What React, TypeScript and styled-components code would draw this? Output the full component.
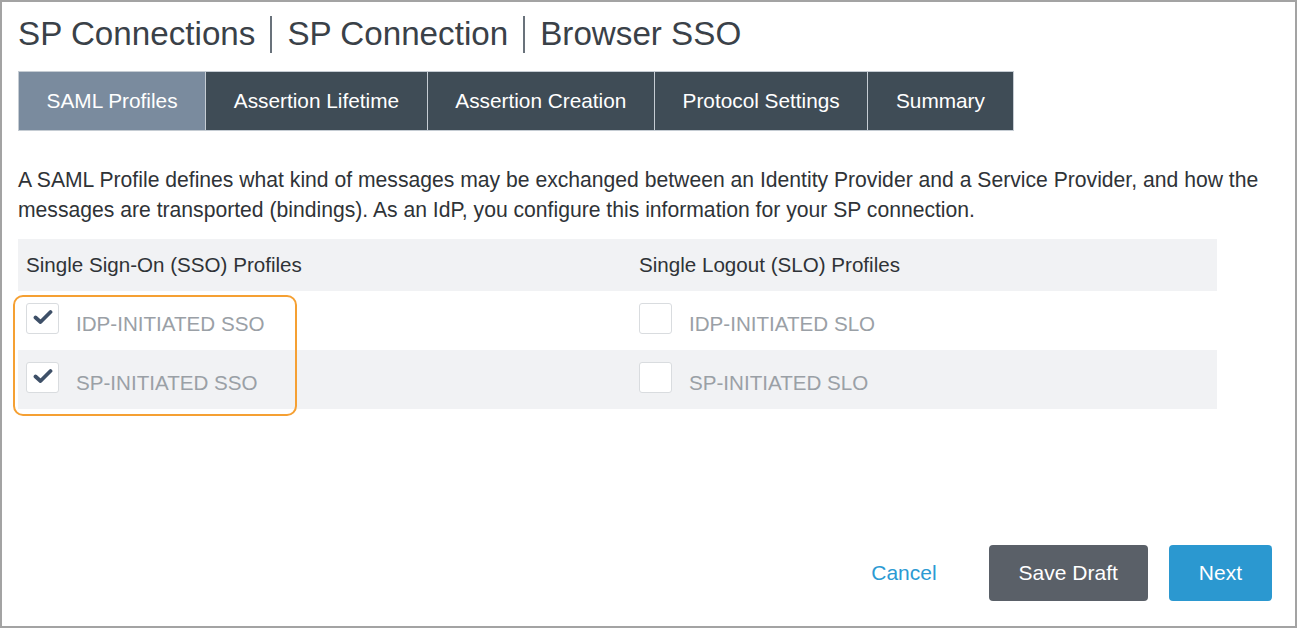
import React from 'react';
import styled, { createGlobalStyle } from 'styled-components';

const GlobalStyle = createGlobalStyle`
  html, body {
    margin: 0;
    padding: 0;
    background: #ffffff;
    font-family: "Liberation Sans", Arial, sans-serif;
  }
`;

const tabs = ['SAML Profiles', 'Assertion Lifetime', 'Assertion Creation', 'Protocol Settings', 'Summary'];

const rows = [
  { sso: 'IDP-INITIATED SSO', ssoChecked: true, slo: 'IDP-INITIATED SLO', sloChecked: false },
  { sso: 'SP-INITIATED SSO', ssoChecked: true, slo: 'SP-INITIATED SLO', sloChecked: false },
];

const Check: React.FC<{ checked: boolean }> = ({ checked }) => (
  <Box>
    {checked && (
      <svg width="20" height="16" viewBox="0 0 20 16">
        <path d="M2.5 8.5 L7.5 13 L17.5 3" fill="none" stroke="#3e5068" strokeWidth="3.8" strokeLinecap="round" strokeLinejoin="round" />
      </svg>
    )}
  </Box>
);

export default function App() {
  return (
    <Frame>
      <GlobalStyle />
      <Title>
        <Crumb>SP Connections</Crumb>
        <Divider />
        <Crumb>SP Connection</Crumb>
        <Divider />
        <Crumb>Browser SSO</Crumb>
      </Title>
      <Tabs>
        {tabs.map((t, i) => (
          <Tab key={t} $active={i === 0}>{t}</Tab>
        ))}
      </Tabs>
      <Intro>
        A SAML Profile defines what kind of messages may be exchanged between an Identity Provider and a Service Provider, and how the
        <br />
        messages are transported (bindings). As an IdP, you configure this information for your SP connection.
      </Intro>
      <Table>
        <HeadRow>
          <HeadCell>Single Sign-On (SSO) Profiles</HeadCell>
          <HeadCell>Single Logout (SLO) Profiles</HeadCell>
        </HeadRow>
        {rows.map((r, i) => (
          <Row key={r.sso} $shaded={i % 2 === 1}>
            <Cell>
              <Check checked={r.ssoChecked} />
              <Label>{r.sso}</Label>
            </Cell>
            <Cell>
              <Check checked={r.sloChecked} />
              <Label>{r.slo}</Label>
            </Cell>
          </Row>
        ))}
        <Highlight />
      </Table>
      <Footer>
        <LinkButton>Cancel</LinkButton>
        <Button $variant="secondary">Save Draft</Button>
        <Button $variant="primary">Next</Button>
      </Footer>
    </Frame>
  );
}

const Frame = styled.div`
  box-sizing: border-box;
  width: 1297px;
  height: 628px;
  border: 2px solid #a3a3a3;
  padding: 10px 23px 25px 16px;
  display: flex;
  flex-direction: column;
  color: #333;
`;

const Title = styled.div`
  display: flex;
  align-items: center;
  height: 44px;
  font-size: 33.2px;
  color: #3a4148;
`;

const Crumb = styled.span`
  line-height: 44px;
`;

const Divider = styled.span`
  width: 2px;
  height: 37px;
  background: #69727b;
  margin: 0 15px;
`;

const Tabs = styled.div`
  display: flex;
  margin-top: 15px;
  height: 60px;
`;

const Tab = styled.div<{ $active?: boolean }>`
  display: flex;
  align-items: center;
  padding: 0 27.6px;
  font-size: 20.8px;
  color: #ffffff;
  background: ${p => (p.$active ? '#7a8b9e' : '#3f4c56')};
  border: 1px solid #c5ccd3;
  & + & {
    border-left: none;
  }
`;

const Intro = styled.p`
  margin: 34px 0 14px 0;
  font-size: 21.15px;
  line-height: 30px;
  color: #2f3337;
  white-space: nowrap;
`;

const Table = styled.div`
  position: relative;
  width: 1199px;
`;

const HeadRow = styled.div`
  display: grid;
  grid-template-columns: 613px 1fr;
  height: 52px;
  background: #f1f2f4;
`;

const HeadCell = styled.div`
  display: flex;
  align-items: center;
  padding-left: 8px;
  font-size: 20.6px;
  color: #2f3337;
`;

const Row = styled.div<{ $shaded?: boolean }>`
  display: grid;
  grid-template-columns: 613px 1fr;
  height: 59px;
  background: ${p => (p.$shaded ? '#f1f2f4' : '#ffffff')};
`;

const Cell = styled.div`
  display: flex;
  align-items: center;
  padding-left: 8px;
`;

const Box = styled.div`
  box-sizing: border-box;
  width: 33px;
  height: 31px;
  margin-top: -4px;
  border: 1px solid #d9dcdf;
  border-radius: 3px;
  background: #ffffff;
  display: flex;
  align-items: center;
  justify-content: center;
  svg {
    margin-top: -4px;
  }
`;

const Label = styled.span`
  margin-left: 17px;
  padding-top: 6px;
  font-size: 20.6px;
  color: #9aa0a6;
`;

const Highlight = styled.div`
  position: absolute;
  left: -5px;
  top: 56px;
  width: 284px;
  height: 121px;
  box-sizing: border-box;
  border: 2px solid #f5a033;
  border-radius: 10px;
  pointer-events: none;
`;

const Footer = styled.div`
  margin-top: auto;
  display: flex;
  justify-content: flex-end;
  align-items: center;
  gap: 21px;
`;

const LinkButton = styled.span`
  font-size: 21px;
  color: #2c9ad3;
  margin-right: 31px;
`;

const Button = styled.button<{ $variant: 'primary' | 'secondary' }>`
  height: 56px;
  padding: 0 30px;
  border: none;
  border-radius: 4px;
  font-family: "Liberation Sans", Arial, sans-serif;
  font-size: 21px;
  color: #ffffff;
  background: ${p => (p.$variant === 'primary' ? '#2b98d0' : '#5a6068')};
`;
